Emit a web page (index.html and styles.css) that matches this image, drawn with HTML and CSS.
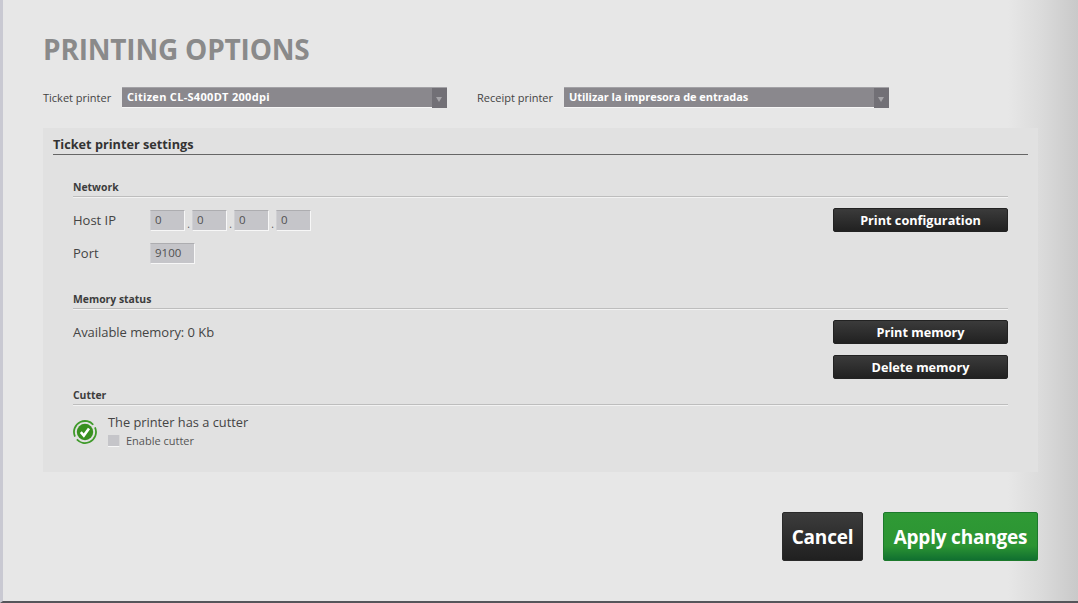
FILE: index.html
```html
<!DOCTYPE html>
<html lang="en">
<head>
  <meta charset="UTF-8" />
  <title>Printing options</title>
  <link rel="stylesheet" href="styles.css">
</head>
<body>
  <div class="page">
    <h1>PRINTING OPTIONS</h1>

    <div class="printers">
      <label class="printer-label">Ticket printer</label>
      <div class="select select-ticket">
        <span>Citizen CL-S400DT 200dpi</span>
        <div class="select-arrow"></div>
      </div>
      <label class="printer-label receipt-label">Receipt printer</label>
      <div class="select select-receipt">
        <span>Utilizar la impresora de entradas</span>
        <div class="select-arrow"></div>
      </div>
    </div>

    <div class="panel">
      <h2>Ticket printer settings</h2>

      <div class="section section-network">
        <h3>Network</h3>
        <div class="section-body">
          <div class="fields">
            <div class="field-row">
              <span class="field-label">Host IP</span>
              <span class="input input-ip">0</span><span class="dot">.</span>
              <span class="input input-ip">0</span><span class="dot">.</span>
              <span class="input input-ip">0</span><span class="dot">.</span>
              <span class="input input-ip">0</span>
            </div>
            <div class="field-row">
              <span class="field-label">Port</span>
              <span class="input input-port">9100</span>
            </div>
          </div>
          <button class="dark-button">Print configuration</button>
        </div>
      </div>

      <div class="section section-memory">
        <h3>Memory status</h3>
        <div class="section-body">
          <span class="memory-text">Available memory: 0 Kb</span>
          <div class="button-stack">
            <button class="dark-button">Print memory</button>
            <button class="dark-button">Delete memory</button>
          </div>
        </div>
      </div>

      <div class="section section-cutter">
        <h3>Cutter</h3>
        <div class="cutter-body">
          <svg class="status-icon" width="24" height="24" viewBox="0 0 24 24">
            <circle cx="12" cy="12" r="11" fill="none" stroke="#3f9a2a" stroke-width="1.8" stroke-dasharray="31 3.5" transform="rotate(-25 12 12)" />
            <circle cx="12" cy="12" r="8.2" fill="#38901f" />
            <path d="M7.8 12.2l3 3.4 5.2-7.2" fill="none" stroke="#fff" stroke-width="2.6" />
          </svg>
          <div>
            <div class="cutter-text">The printer has a cutter</div>
            <label class="check-row"><span class="checkbox"></span>Enable cutter</label>
          </div>
        </div>
      </div>
    </div>

    <div class="actions">
      <button class="big-button cancel-button">Cancel</button>
      <button class="big-button apply-button">Apply changes</button>
    </div>
  </div>
</body>
</html>
```

FILE: styles.css
```css
html, body {
  margin: 0;
  padding: 0;
  height: 100%;
  overflow: hidden;
}

body {
  font-family: "Open Sans", "Noto Sans", sans-serif;
  color: #444;
}

.page {
  box-sizing: border-box;
  width: 1078px;
  height: 603px;
  padding: 32px 40px 0 40px;
  border-left: 3px solid #c9c9d2;
  border-bottom: 2px solid #55555a;
  background: linear-gradient(to right, #e7e7e7 0, #e7e7e7 1005px, #dcdcdc 1035px, #c9c9c9 1075px);
}

h1 {
  margin: 0;
  font-size: 28px;
  line-height: 34px;
  font-weight: 700;
  letter-spacing: -0.2px;
  color: #8a8a8a;
}

.printers {
  display: flex;
  align-items: center;
  margin-top: 21px;
  height: 21px;
}

.printer-label {
  font-size: 11px;
  color: #444;
  width: 79px;
  white-space: nowrap;
}

.receipt-label {
  width: 87px;
  margin-left: 30px;
}

.select {
  box-sizing: border-box;
  display: flex;
  justify-content: space-between;
  width: 325px;
  height: 21px;
  padding-left: 5px;
  background-color: #8a888d;
  border-top: 1px solid #a3a2a6;
  border-bottom: 1px solid #f6f6f6;
  color: #fff;
  font-size: 11px;
  font-weight: 700;
  line-height: 18px;
}

.select-ticket span {
  letter-spacing: 0.3px;
}

.select-receipt span {
  letter-spacing: -0.05px;
}

.select-arrow {
  position: relative;
  width: 15px;
  margin-bottom: -1px;
  background-color: #727076;
}

.select-arrow::after {
  content: "";
  position: absolute;
  left: 4px;
  top: 9px;
  border-left: 3.5px solid transparent;
  border-right: 3.5px solid transparent;
  border-top: 5px solid #a5a4a8;
}

.panel {
  box-sizing: border-box;
  height: 344px;
  margin-top: 20px;
  padding: 8px 10px 0 10px;
  background-color: #e1e1e1;
}

h2 {
  margin: 0;
  height: 18px;
  padding-bottom: 0;
  border-bottom: 1px solid #666;
  font-size: 12.7px;
  line-height: 17px;
  font-weight: 700;
  color: #333;
}

.section {
  margin: 0 20px;
}

h3 {
  margin: 0;
  height: 16px;
  border-bottom: 1px solid #bdbdbd;
  box-shadow: 0 1px 0 #f2f2f2;
  font-size: 10.4px;
  line-height: 15px;
  font-weight: 700;
  color: #3c3c3c;
}

.section-network {
  margin-top: 25px;
}

.section-memory {
  margin-top: 28px;
}

.section-cutter {
  margin-top: 9px;
}

.section-body {
  display: flex;
  justify-content: space-between;
  align-items: flex-start;
  padding-top: 11px;
}

.fields {
  display: flex;
  flex-direction: column;
  gap: 12px;
  margin-top: 2px;
}

.field-row {
  display: flex;
  align-items: center;
  height: 21px;
}

.field-label {
  width: 77px;
  padding-bottom: 2px;
  font-size: 13px;
}

.input {
  box-sizing: border-box;
  height: 21px;
  padding-left: 4px;
  background-color: #c5c5c9;
  border-top: 1px solid #adadb0;
  border-left: 1px solid #d0d0d3;
  border-right: 1px solid #f7f7f7;
  border-bottom: 1px solid #f7f7f7;
  font-size: 11.5px;
  line-height: 18px;
  color: #505050;
}

.input-ip {
  width: 35px;
}

.input-port {
  width: 45px;
}

.dot {
  width: 7px;
  padding-top: 6px;
  text-align: center;
  font-size: 10px;
  color: #555;
}

.dark-button {
  display: block;
  width: 175px;
  height: 24px;
  padding: 0;
  border: 1px solid #222;
  border-radius: 2px;
  background: linear-gradient(to bottom, #3b3b3b, #212121);
  color: #fff;
  font-family: inherit;
  font-size: 12.7px;
  font-weight: 700;
}

.button-stack {
  display: flex;
  flex-direction: column;
  gap: 11px;
}

.memory-text {
  font-size: 13px;
  line-height: 24px;
  letter-spacing: -0.05px;
}

.cutter-body {
  display: flex;
  align-items: flex-start;
  gap: 11px;
  padding-top: 8px;
}

.status-icon {
  margin-top: 7px;
}

.cutter-text {
  font-size: 12.8px;
  line-height: 18px;
}

.check-row {
  display: flex;
  align-items: center;
  gap: 6px;
  margin-top: 3px;
  font-size: 11px;
  line-height: 14px;
  color: #555;
}

.checkbox {
  box-sizing: border-box;
  width: 12px;
  height: 12px;
  background-color: #c5c5c9;
  border-bottom: 1px solid #f7f7f7;
  border-right: 1px solid #d8d8d8;
}

.actions {
  display: flex;
  justify-content: flex-end;
  gap: 20px;
  margin-top: 40px;
}

.big-button {
  height: 49px;
  padding: 0;
  border-radius: 2px;
  color: #fff;
  font-family: inherit;
  font-size: 19px;
  font-weight: 700;
  letter-spacing: -0.2px;
}

.cancel-button {
  width: 81px;
  border: 1px solid #2a2a2a;
  background: linear-gradient(to bottom, #3c3c3c, #202020);
}

.apply-button {
  width: 155px;
  border: 1px solid #1c7a2c;
  background: linear-gradient(to bottom, #2f9a35 0, #2c9433 70%, #107030 100%);
}
```
